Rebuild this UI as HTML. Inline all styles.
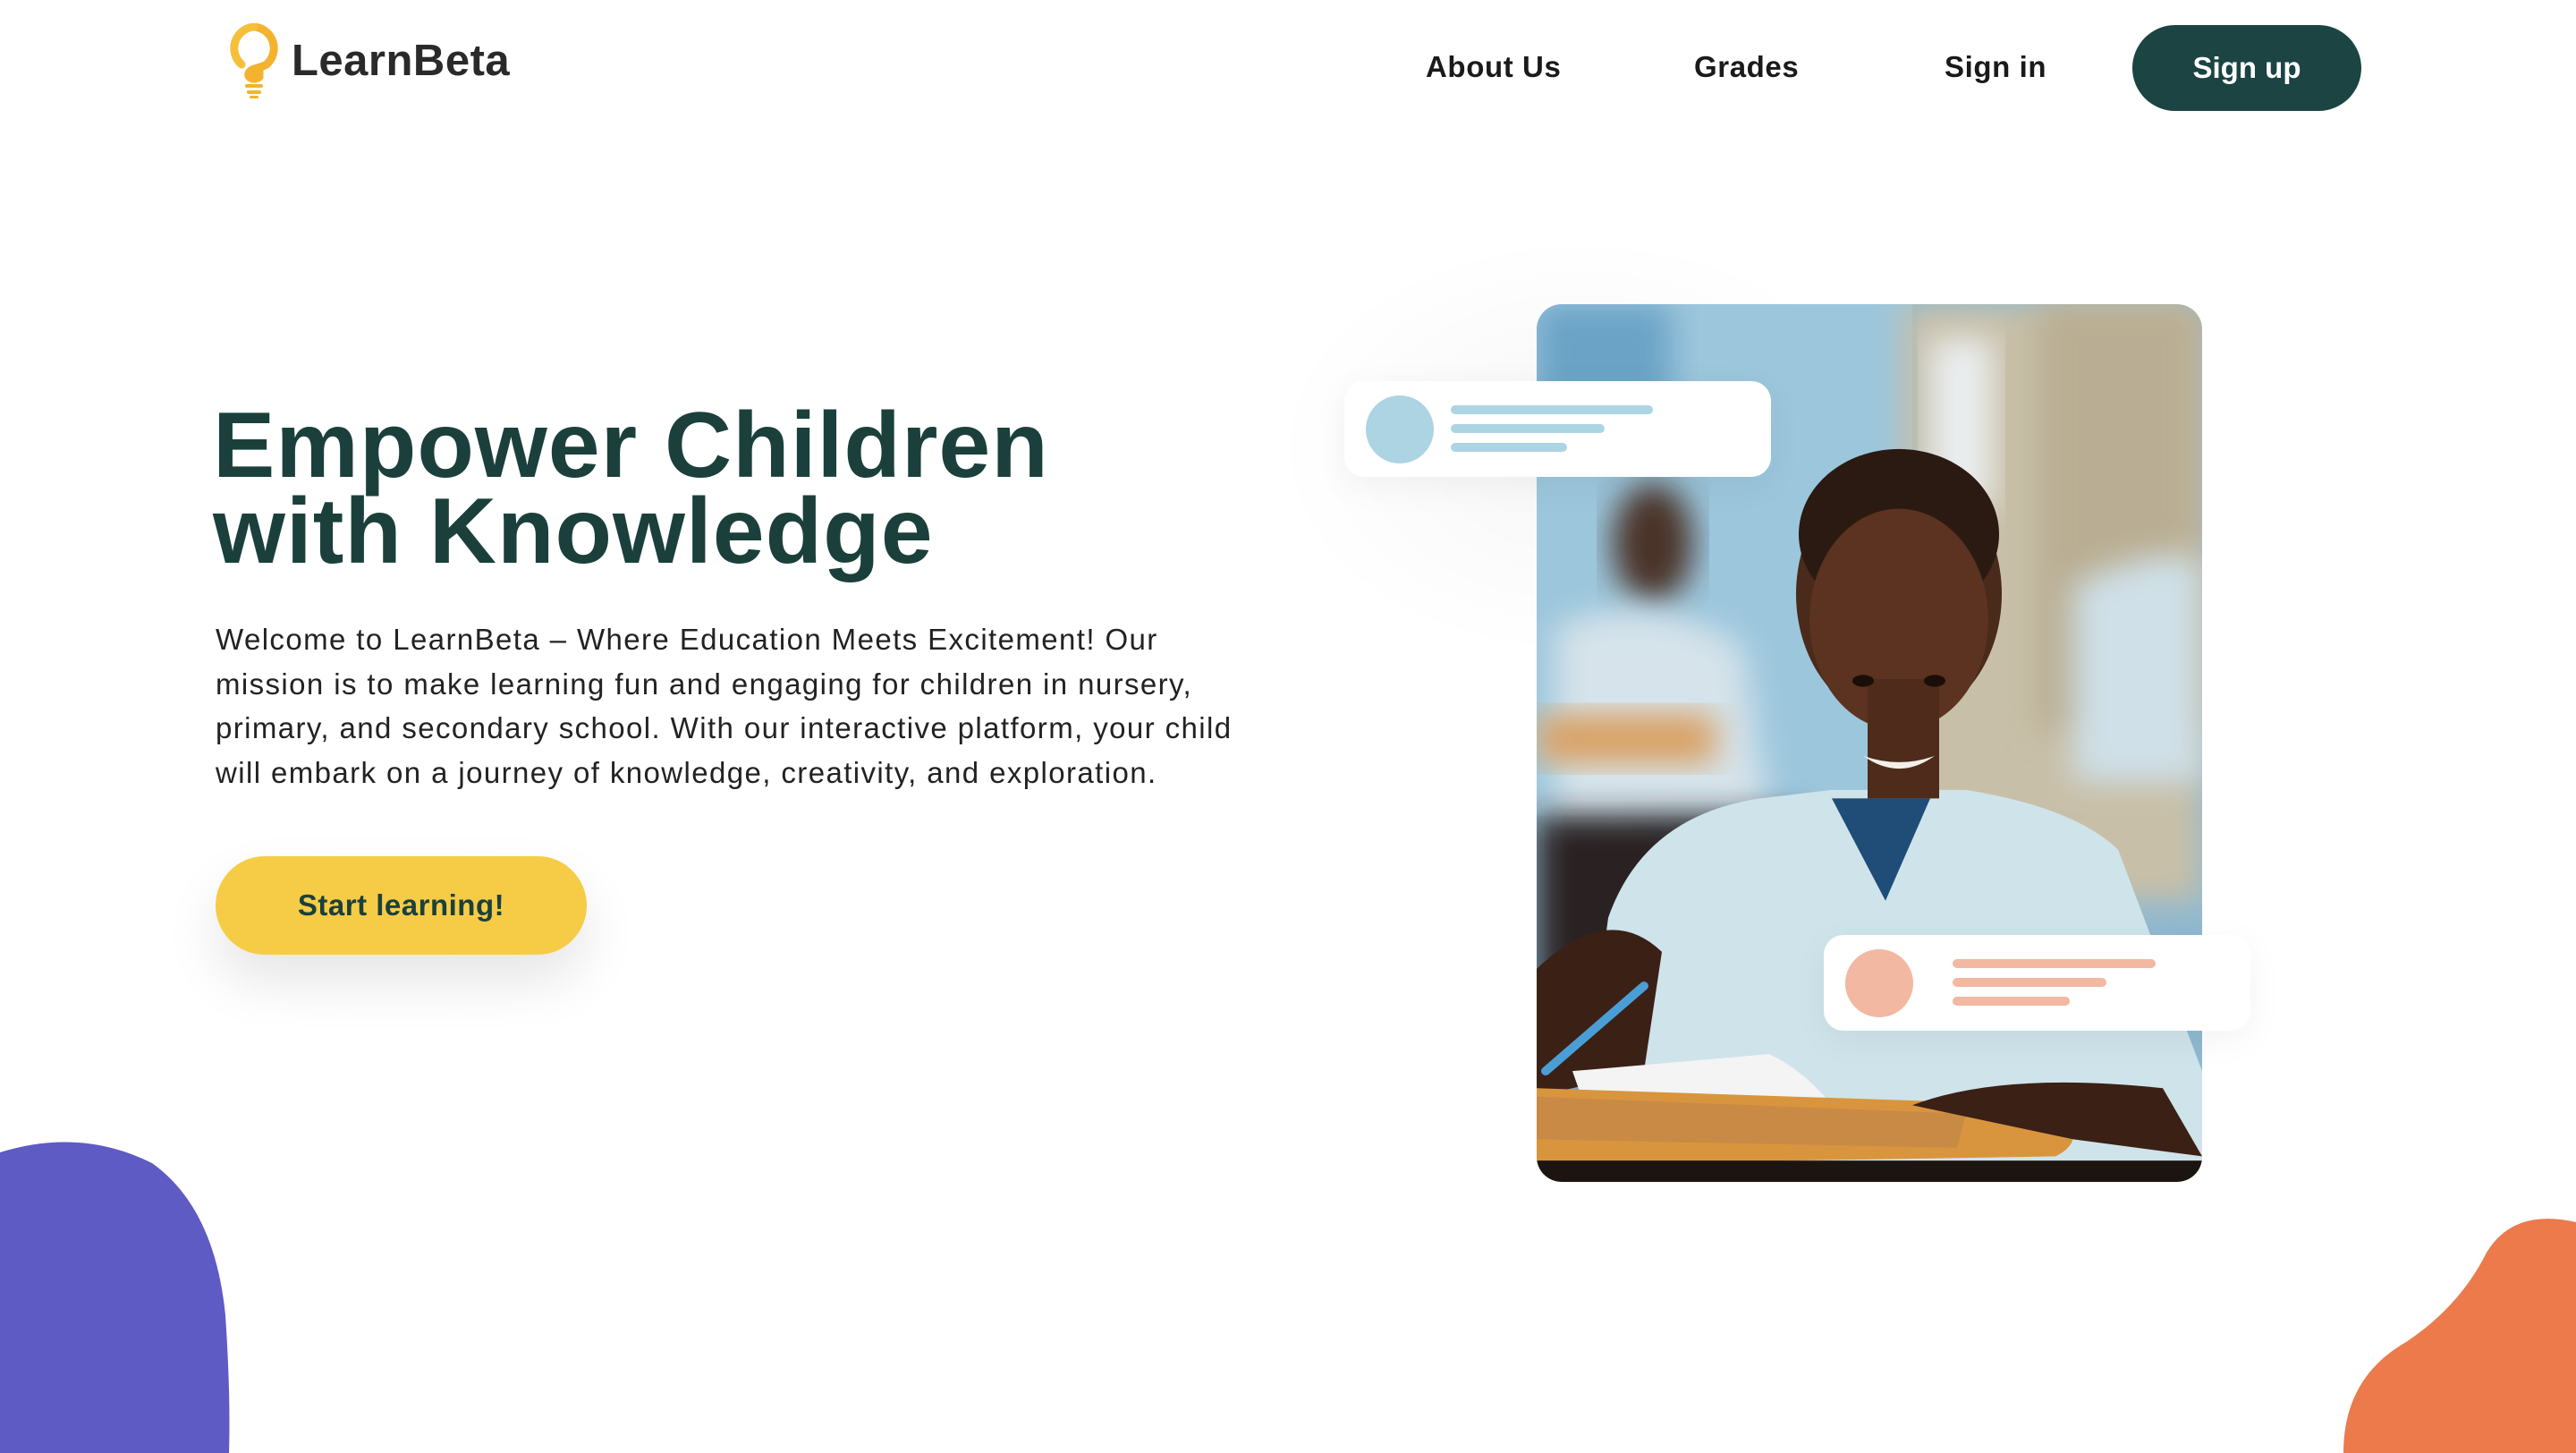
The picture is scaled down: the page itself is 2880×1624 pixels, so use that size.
<!DOCTYPE html>
<html><head><meta charset="utf-8"><style>
*{margin:0;padding:0;box-sizing:border-box}
body{width:2880px;height:1624px;overflow:hidden;background:#fff;font-family:"Liberation Sans",sans-serif;position:relative}
.abs{position:absolute}
.nav{font-weight:bold;font-size:33px;color:#1a1a1a;top:56px;letter-spacing:0.6px}
h1{position:absolute;left:238px;top:450px;font-size:104px;line-height:96px;color:#1b403c;font-weight:bold;letter-spacing:1px}
.p{left:241px;top:690px;font-size:33px;line-height:49.5px;color:#222;letter-spacing:1.4px;white-space:nowrap}
.btn{left:241px;top:957px;width:415px;height:110px;border-radius:55px;background:#f6cc46;color:#1b403c;font-weight:bold;font-size:33px;display:flex;align-items:center;justify-content:center;box-shadow:0 30px 60px rgba(0,0,0,0.10);letter-spacing:0.5px}
.card{background:#fff;border-radius:22px;box-shadow:0 10px 40px rgba(0,0,0,0.05)}
.ln{position:absolute;height:10px;border-radius:5px}
</style></head><body>
<div class="abs" style="left:1420px;top:260px;width:700px;height:480px;border-radius:50%;background:radial-gradient(ellipse,rgba(0,0,0,0.035),rgba(0,0,0,0) 70%)"></div>
<svg class="abs" style="left:254px;top:26px" width="60" height="86" viewBox="0 0 60 86">
<path d="M30 4 A24 24 0 0 1 44 46 C38 50 26 50 24 56 C22 62 32 64 36 60 L36 56 L30 56" fill="none" stroke="#f3b32e" stroke-width="9" stroke-linecap="round"/>
<path d="M30 4 A24 24 0 0 0 16 46" fill="none" stroke="#f5bf3a" stroke-width="9" stroke-linecap="round"/>
<rect x="20" y="68" width="20" height="4" rx="2" fill="#f3b32e"/><rect x="22" y="75" width="16" height="4" rx="2" fill="#f3b32e"/><rect x="25" y="81" width="10" height="3" rx="1.5" fill="#f3b32e"/>
</svg>
<div class="abs" style="left:326px;top:40px;font-size:49px;font-weight:bold;color:#2a2a2a;letter-spacing:0.5px">LearnBeta</div>
<div class="abs nav" style="left:1594px">About Us</div>
<div class="abs nav" style="left:1894px">Grades</div>
<div class="abs nav" style="left:2174px">Sign in</div>
<div class="abs" style="left:2384px;top:28px;width:256px;height:96px;border-radius:48px;background:#1b4443;color:#fff;font-weight:bold;font-size:33px;display:flex;align-items:center;justify-content:center">Sign up</div>

<h1>Empower Children<br>with Knowledge</h1>
<div class="abs p">Welcome to LearnBeta – Where Education Meets Excitement! Our<br>mission is to make learning fun and engaging for children in nursery,<br>primary, and secondary school. With our interactive platform, your child<br>will embark on a journey of knowledge, creativity, and exploration.</div>
<div class="abs btn">Start learning!</div>

<svg class="abs" style="left:1718px;top:340px;border-radius:28px" width="744" height="981" viewBox="0 0 744 1030" preserveAspectRatio="none">
<defs><filter id="b" x="-20%" y="-20%" width="140%" height="140%"><feGaussianBlur stdDeviation="18"/></filter>
<clipPath id="c"><rect width="744" height="1030" rx="28"/></clipPath></defs>
<g clip-path="url(#c)">
<rect width="744" height="1030" fill="#8fb9d0"/>
<rect x="0" y="0" width="420" height="600" fill="#9cc6dc"/>
<rect x="0" y="0" width="150" height="120" fill="#6aa3c6" filter="url(#b)"/>
<rect x="410" y="0" width="334" height="700" fill="#c8bfa8" filter="url(#b)"/>
<rect x="440" y="40" width="70" height="200" fill="#eaeef0" filter="url(#b)"/>
<rect x="560" y="0" width="184" height="500" fill="#b9ae93" filter="url(#b)"/>
<ellipse cx="130" cy="280" rx="45" ry="70" fill="#4a3328" filter="url(#b)"/>
<path d="M20 380 Q120 330 230 400 L260 600 L20 620 Z" fill="#d6e3ea" filter="url(#b)"/>
<rect x="0" y="600" width="300" height="300" fill="#2a2320" filter="url(#b)"/>
<rect x="0" y="480" width="200" height="60" fill="#d9a266" filter="url(#b)"/>
<path d="M600 330 Q700 280 744 300 L744 560 L600 560 Z" fill="#cfe0e8" filter="url(#b)"/>
<path d="M80 720 Q120 600 250 580 L330 570 L480 570 Q600 590 650 640 L744 900 L744 1030 L40 1030 Z" fill="#cfe3ea"/>
<g transform="translate(0,80)">
<path d="M330 500 L390 620 L440 500 Z" fill="#1f4d78"/>
<ellipse cx="405" cy="260" rx="115" ry="150" fill="#4a2a1a"/>
<ellipse cx="405" cy="190" rx="112" ry="100" fill="#2a1a12"/>
<ellipse cx="405" cy="290" rx="100" ry="130" fill="#5c3220"/>
<rect x="370" y="360" width="80" height="140" fill="#4e2b1b"/>
<path d="M365 450 Q405 480 445 450 Q405 465 365 450Z" fill="#f3eee8"/>
<ellipse cx="365" cy="362" rx="12" ry="7" fill="#1a0e08"/><ellipse cx="445" cy="362" rx="12" ry="7" fill="#1a0e08"/>
</g>
<path d="M0 780 Q80 700 140 760 L120 900 L0 930 Z" fill="#3b2016"/>
<path d="M40 900 L260 880 Q300 900 330 940 L60 960 Z" fill="#f4f4f4"/>
<path d="M10 900 L120 800" stroke="#4a9ed6" stroke-width="10" stroke-linecap="round"/>
<path d="M0 920 L580 940 Q620 980 580 1000 L0 1010 Z" fill="#d9953e"/>
<path d="M0 930 L480 950 L470 990 L0 980 Z" fill="#c98a45"/>
<path d="M420 940 Q520 900 700 920 L744 1000 L600 980 Z" fill="#3b2016"/>
<rect x="0" y="1005" width="744" height="30" fill="#1c1410"/>
</g>
</svg>

<div class="abs card" style="left:1503px;top:426px;width:477px;height:107px">
<div class="abs" style="left:24px;top:16px;width:76px;height:76px;border-radius:50%;background:#acd4e3"></div>
<div class="ln" style="left:119px;top:27px;width:226px;background:#acd4e3"></div>
<div class="ln" style="left:119px;top:48px;width:172px;background:#acd4e3"></div>
<div class="ln" style="left:119px;top:69px;width:130px;background:#acd4e3"></div>
</div>
<div class="abs card" style="left:2039px;top:1045px;width:477px;height:107px">
<div class="abs" style="left:24px;top:16px;width:76px;height:76px;border-radius:50%;background:#f2b8a2"></div>
<div class="ln" style="left:144px;top:27px;width:227px;background:#f2b8a2"></div>
<div class="ln" style="left:144px;top:48px;width:172px;background:#f2b8a2"></div>
<div class="ln" style="left:144px;top:69px;width:131px;background:#f2b8a2"></div>
</div>

<svg class="abs" style="left:0;top:1270px" width="270" height="354" viewBox="0 0 270 354">
<path d="M0 18 Q90 -10 170 30 Q240 80 252 200 Q258 290 256 354 L0 354 Z" fill="#5e5bc4"/>
</svg>
<svg class="abs" style="left:2610px;top:1360px" width="270" height="264" viewBox="0 0 270 264">
<path d="M270 6 Q200 -10 170 40 Q140 100 80 140 Q10 180 10 264 L270 264 Z" fill="#ec7a4b"/>
</svg>
</body></html>
